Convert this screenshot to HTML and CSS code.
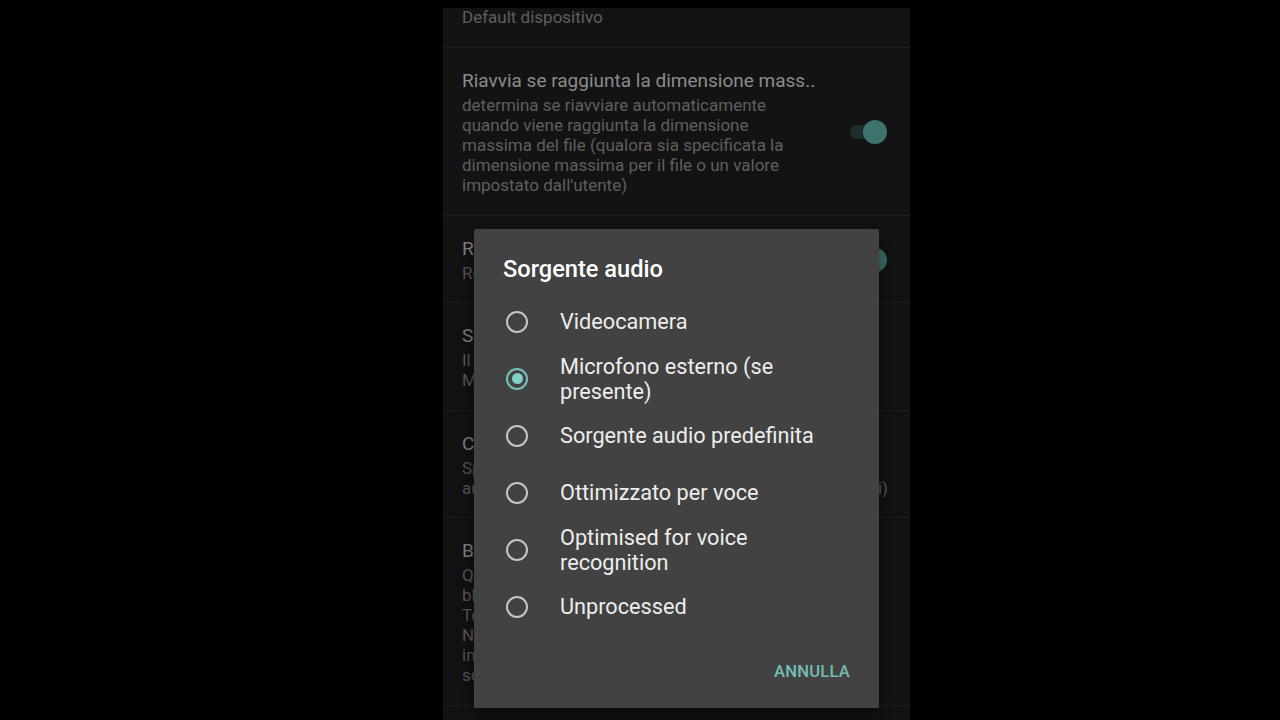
FILE: index.html
```html
<!DOCTYPE html>
<html lang="it">
<head>
<meta charset="utf-8">
<title>Sorgente audio</title>
<link rel="stylesheet" href="styles.css">
</head>
<body>
<div class="screen">
  <div class="pref first">
    <div class="pref-text">
      <div class="pref-summary">Default dispositivo</div>
    </div>
  </div>
  <div class="pref">
    <div class="pref-text narrow">
      <div class="pref-title">Riavvia se raggiunta la dimensione mass..</div>
      <div class="pref-summary">determina se riavviare automaticamente quando viene raggiunta la dimensione massima del file (qualora sia specificata la dimensione massima per il file o un valore impostato dall'utente)</div>
    </div>
    <div class="switch"><span class="thumb"></span></div>
  </div>
  <div class="pref">
    <div class="pref-text narrow">
      <div class="pref-title">Registra audio</div>
      <div class="pref-summary">Registra anche l'audio</div>
    </div>
    <div class="switch"><span class="thumb"></span></div>
  </div>
  <div class="pref">
    <div class="pref-text">
      <div class="pref-title">Sorgente audio</div>
      <div class="pref-summary lines">Il microfono da usare<br>Microfono esterno (se presente)</div>
    </div>
  </div>
  <div class="pref">
    <div class="pref-text">
      <div class="pref-title">Conto alla rovescia</div>
      <div class="pref-summary lines">Specifica il ritardo prima dell'avvio</div>
      <div class="pref-summary full-line">automatico della registrazione del video (in secondi)</div>
    </div>
  </div>
  <div class="pref">
    <div class="pref-text">
      <div class="pref-title">Blocca schermo</div>
      <div class="pref-summary lines">Questa opzione consente di<br>bloccare lo schermo durante<br>Tocca due volte per sbloccare<br>Nota: il tasto indietro resta<br>in funzione anche con lo<br>schermo bloccato</div>
    </div>
  </div>

  <div class="dialog">
    <h2 class="dialog-title">Sorgente audio</h2>
    <ul class="options">
      <li class="option"><span class="radio"></span><span class="option-label">Videocamera</span></li>
      <li class="option"><span class="radio checked"></span><span class="option-label">Microfono esterno (se presente)</span></li>
      <li class="option"><span class="radio"></span><span class="option-label">Sorgente audio predefinita</span></li>
      <li class="option"><span class="radio"></span><span class="option-label">Ottimizzato per voce</span></li>
      <li class="option"><span class="radio"></span><span class="option-label">Optimised for voice recognition</span></li>
      <li class="option"><span class="radio"></span><span class="option-label">Unprocessed</span></li>
    </ul>
    <div class="actions">
      <button class="text-button">Annulla</button>
    </div>
  </div>
</div>
</body>
</html>
```

FILE: styles.css
```css
html, body {
  margin: 0;
  padding: 0;
}

body {
  width: 1280px;
  height: 720px;
  overflow: hidden;
  background: #000;
  font-family: Roboto, "Noto Sans", "Liberation Sans", sans-serif;
}

.screen {
  position: relative;
  width: 467px;
  height: 712px;
  margin: 8px 0 0 443px;
  background: #131313;
  overflow: hidden;
}

.pref {
  display: flex;
  align-items: center;
  padding: 21px 23px 19.5px 19px;
  border-bottom: 1px solid #1f1f1f;
}

.pref.first {
  padding-top: 0;
  padding-bottom: 20px;
}

.pref.first .pref-summary {
  margin-top: -1px;
}

.pref-text {
  flex: 1 1 auto;
  min-width: 0;
}

.pref-text.narrow {
  flex: 0 0 335px;
}

.pref-title {
  font-size: 19px;
  line-height: 24px;
  color: #8b8b8b;
  margin-bottom: 2px;
  white-space: nowrap;
}

.pref-summary {
  font-size: 17px;
  line-height: 20px;
  color: #5f5f5f;
}

.pref-summary.lines {
  white-space: nowrap;
}

.pref-summary.full-line {
  width: 426px;
  white-space: nowrap;
  text-align: justify;
  text-align-last: justify;
}

.switch {
  position: relative;
  margin-left: auto;
  width: 38px;
  height: 24px;
  flex: 0 0 38px;
}

.switch::before {
  content: "";
  position: absolute;
  left: 1px;
  top: 5px;
  width: 33px;
  height: 14px;
  border-radius: 7px;
  background: #1f2e2d;
}

.thumb {
  position: absolute;
  right: 0;
  top: 0;
  width: 24px;
  height: 24px;
  border-radius: 50%;
  background: #3d736d;
}

.dialog {
  position: absolute;
  left: 31px;
  top: 221px;
  width: 405px;
  height: 479px;
  box-sizing: border-box;
  padding: 28px 29px 18px 29px;
  background: #424242;
  border-radius: 2px;
  box-shadow: 0 10px 28px rgba(0, 0, 0, 0.55);
  display: flex;
  flex-direction: column;
}

.dialog-title {
  margin: 0;
  font-size: 23.6px;
  font-weight: 500;
  line-height: 24px;
  color: #ffffff;
}

.options {
  list-style: none;
  margin: 12px 0 0 0;
  padding: 0;
}

.option {
  display: flex;
  align-items: center;
  min-height: 57px;
}

.radio {
  flex: 0 0 22px;
  width: 22px;
  height: 22px;
  box-sizing: border-box;
  margin-left: 3px;
  border: 2.5px solid #c6c6c6;
  border-radius: 50%;
  position: relative;
}

.radio.checked {
  border-color: #74c2b9;
}

.radio.checked::after {
  content: "";
  position: absolute;
  left: 50%;
  top: 50%;
  width: 11px;
  height: 11px;
  margin: -5.5px 0 0 -5.5px;
  border-radius: 50%;
  background: #7fd0c6;
}

.option-label {
  margin-left: 32px;
  font-size: 21.7px;
  line-height: 25px;
  color: #ededed;
}

.actions {
  margin-top: auto;
  display: flex;
  justify-content: flex-end;
}

.text-button {
  font-family: inherit;
  font-size: 16.6px;
  font-weight: 500;
  line-height: 36px;
  letter-spacing: 0.2px;
  text-transform: uppercase;
  color: #74bdb3;
  background: none;
  border: 0;
  padding: 0;
  cursor: pointer;
}
```
